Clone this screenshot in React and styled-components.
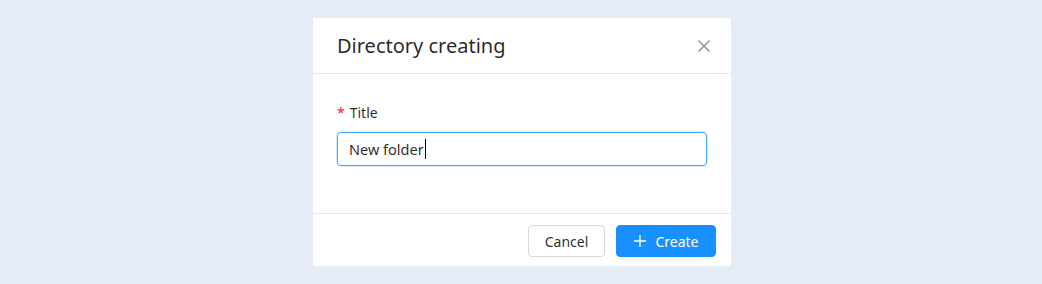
import React from 'react';
import styled, { createGlobalStyle } from 'styled-components';

const GlobalStyle = createGlobalStyle`
  html, body {
    margin: 0;
    padding: 0;
    background: #e6ecf5;
  }
  body {
    font-family: "Noto Sans", "Open Sans", sans-serif;
    color: rgba(0, 0, 0, 0.85);
  }
`;

// === Страница ===
const Page = styled.div`
  width: 1042px;
  height: 284px;
  display: flex;
  justify-content: center;
  align-items: flex-start;
  padding: 18px 0 0 2px;
  box-sizing: border-box;
`;

const Modal = styled.div`
  width: 418px;
  height: 248px;
  background: #fff;
  display: flex;
  flex-direction: column;
`;

// === Шапка ===
const Header = styled.div`
  height: 55px;
  padding: 0 17px 0 24px;
  display: flex;
  align-items: center;
  justify-content: space-between;
  border-bottom: 1px solid #e8e8e8;
`;

const Heading = styled.div`
  font-size: 20px;
  color: rgba(0, 0, 0, 0.85);
`;

const CloseButton = styled.button`
  border: 0;
  background: none;
  padding: 0;
  width: 20px;
  height: 20px;
  display: flex;
  align-items: center;
  justify-content: center;
  color: rgba(0, 0, 0, 0.45);
  cursor: pointer;
`;

// === Тело ===
const Body = styled.div`
  flex: 1;
  padding: 27px 24px 0;
  border-bottom: 1px solid #e8e8e8;
`;

const Label = styled.label`
  display: flex;
  align-items: center;
  font-size: 14px;
  height: 22px;
  margin-bottom: 9px;
`;

const Required = styled.span`
  color: #f5222d;
  font-size: 14px;
  margin-right: 5px;
`;

const Input = styled.div`
  height: 34px;
  box-sizing: border-box;
  border: 1px solid #40a9ff;
  border-radius: 4px;
  box-shadow: 0 0 0 1px rgba(24, 144, 255, 0.15);
  padding: 0 11px;
  display: flex;
  align-items: center;
  font-size: 14.5px;
`;

const Caret = styled.span`
  display: inline-block;
  width: 1px;
  height: 20px;
  background: #000;
  margin-left: 1px;
`;

// === Подвал ===
const Footer = styled.div`
  height: 52px;
  padding: 2px 15px 0;
  box-sizing: border-box;
  display: flex;
  align-items: center;
  justify-content: flex-end;
  gap: 11px;
`;

const Button = styled.button`
  height: 32px;
  box-sizing: border-box;
  padding: 0 ${p => (p.$primary ? '16px' : '15px')};
  border-radius: 4px;
  border: 1px solid ${p => (p.$primary ? '#1890ff' : '#d9d9d9')};
  background: ${p => (p.$primary ? '#1890ff' : '#fff')};
  color: ${p => (p.$primary ? '#fff' : 'rgba(0, 0, 0, 0.85)')};
  font-family: inherit;
  font-size: 14px;
  display: flex;
  align-items: center;
  gap: 8px;
  min-width: ${p => (p.$primary ? '100px' : '77px')};
  justify-content: center;
  cursor: pointer;
`;

const App = () => (
  <>
    <GlobalStyle />
    <Page>
      <Modal>
        <Header>
          <Heading>Directory creating</Heading>
          <CloseButton aria-label="Close">
            <svg width="14" height="14" viewBox="0 0 14 14">
              <path d="M1.5 1.5 L12.5 12.5 M12.5 1.5 L1.5 12.5" stroke="currentColor" strokeWidth="1.3" />
            </svg>
          </CloseButton>
        </Header>
        <Body>
          <Label>
            <Required>*</Required>Title
          </Label>
          <Input>
            New folder<Caret />
          </Input>
        </Body>
        <Footer>
          <Button>Cancel</Button>
          <Button $primary>
            <svg width="14" height="14" viewBox="0 0 14 14">
              <path d="M7 1 V13 M1 7 H13" stroke="currentColor" strokeWidth="1.3" />
            </svg>
            Create
          </Button>
        </Footer>
      </Modal>
    </Page>
  </>
);

export default App;
